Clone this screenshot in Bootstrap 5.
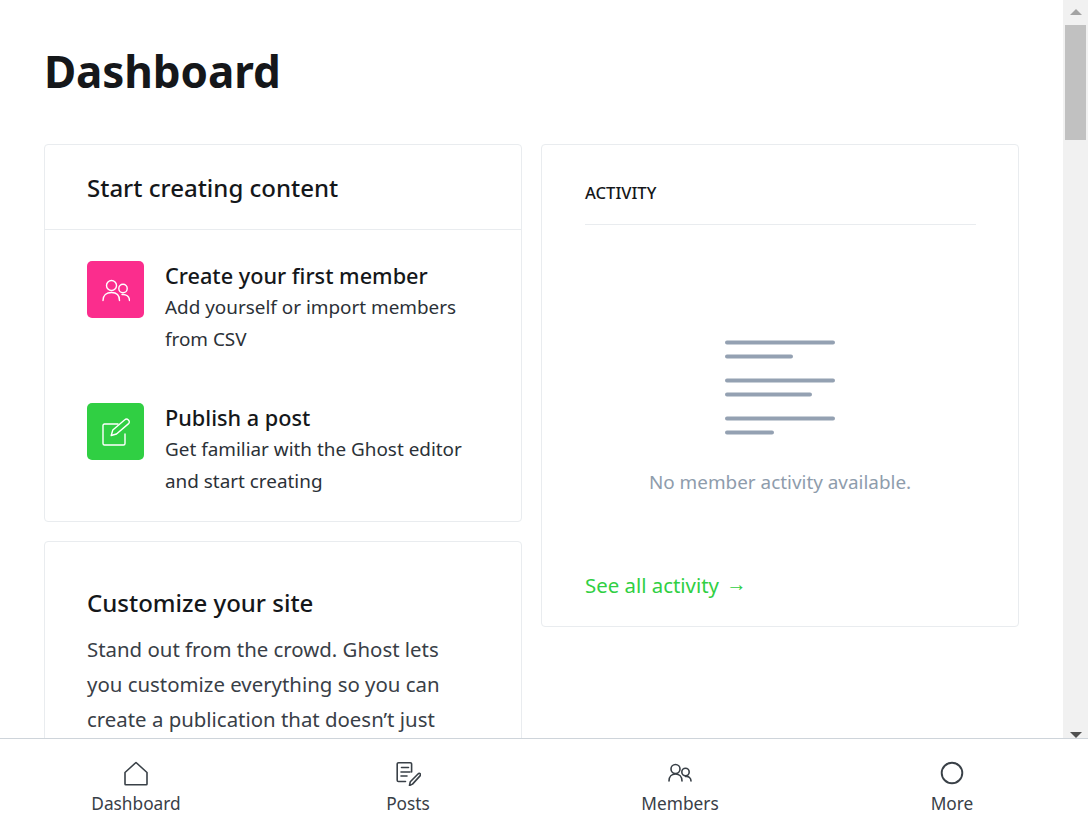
<!DOCTYPE html>
<html lang="en">
<head>
    <meta charset="UTF-8">
    <meta name="viewport" content="width=device-width, initial-scale=1.0">
    <title>Dashboard</title>
    <link href="https://cdn.jsdelivr.net/npm/bootstrap@5.3.0/dist/css/bootstrap.min.css" rel="stylesheet">
    <style>
        html, body { height: 834px; overflow: hidden; }
        body { font-family: "Noto Sans", "Open Sans", sans-serif; color: #15171a; background: #fff; }
        .page-top { height: 738px; overflow: hidden; }
        .page-main { padding: 0 44px; overflow: hidden; }
        .page-title { font-size: 44px; line-height: 63px; font-weight: 700; margin: 40px 0 0; letter-spacing: -.1px; color: #15171a; }
        .dash-grid { display: grid; grid-template-columns: 478px 478px; column-gap: 19px; margin-top: 41px; align-items: start; width: 975px; }
        .left-col { display: flex; flex-direction: column; gap: 19px; }
        .dash-card { border: 1px solid #e9ecef; border-radius: 4px; background: #fff; }
        .start-head { height: 85px; padding: 26px 42px 0; border-bottom: 1px solid #e9ecef; font-size: 24px; line-height: 34px; font-weight: 500; }
        .start-body { padding: 31px 42px 0; height: 291px; }
        .start-item { height: 142px; gap: 21px; }
        .start-tile { width: 57px; height: 57px; border-radius: 5px; flex: none; }
        .tile-pink { background: #fb2d8d; }
        .tile-green { background: #30cf43; }
        .start-name { font-size: 21.7px; line-height: 30px; font-weight: 500; }
        .start-desc { font-size: 18.9px; line-height: 32px; color: #2b3137; }
        .custom-card { padding: 43px 42px 0; height: 300px; }
        .custom-card h2 { font-size: 24px; line-height: 34px; font-weight: 500; margin: 1px 0 12px; }
        .custom-card p { font-size: 20.4px; line-height: 35px; color: #394047; margin: 0; }
        .activity-card { height: 483px; padding: 36px 42px 0 43px; }
        .activity-label { font-size: 16.6px; line-height: 24px; font-weight: 500; height: 44px; border-bottom: 1px solid #e9ecef; color: #15171a; }
        .activity-empty { height: 345px; padding: 114px 1px 0 0; }
        .activity-empty p { font-size: 18.9px; line-height: 28px; color: #8e9cac; margin: 32px 0 0; }
        .activity-link { font-size: 20.4px; line-height: 28px; color: #30cf43; text-decoration: none; }
        .link-arrow { font-family: "Liberation Sans", sans-serif; vertical-align: 2px; margin-left: 2px; }
        .fake-scroll { width: 25px; flex: none; background: #f1f1f1; }
        .fake-thumb { width: 21px; height: 115px; background: #c1c1c1; margin: 10px auto 0; }
        .scroll-up { width: 0; height: 0; margin: 9px auto 0; border: 6px solid transparent; border-top: 0; border-bottom-color: #a3a3a3; }
        .scroll-down { width: 0; height: 0; margin: auto auto 0; border: 6px solid transparent; border-bottom: 0; border-top-color: #505050; }
        .bottom-bar { height: 96px; border-top: 1px solid #ced4da; background: #fff; }
        .bottom-item { flex: 1 1 0; color: #394047; text-decoration: none; font-size: 17.3px; line-height: 24px; padding-top: 21px; }
        .bottom-icon { width: 26px; height: 26px; display: block; margin-bottom: 6px; fill: none; stroke: #394047; stroke-width: 1.6; stroke-linejoin: round; stroke-linecap: round; }
    </style>
</head>
<body>
<div class="d-flex page-top">
    <div class="page-main flex-grow-1">
        <h1 class="page-title">Dashboard</h1>
        <div class="dash-grid">
            <div class="left-col">
                <div class="dash-card">
                    <div class="start-head">Start creating content</div>
                    <div class="start-body">
                        <div class="d-flex start-item">
                            <div class="start-tile tile-pink d-flex align-items-center justify-content-center">
                                <svg width="28" height="28" viewBox="0 0 28 28" fill="none" stroke="#fff" stroke-width="1.4" stroke-linecap="round"><circle cx="9.500" cy="9.500" r="5"/><path d="M1 24.500c0-5 3.500-8 8.500-8s8 3 8 8"/><circle cx="21" cy="12.500" r="4.200"/><path d="M20 18.500c4-.5 7.500 2 7.500 6"/></svg>
                            </div>
                            <div>
                                <div class="start-name">Create your first member</div>
                                <div class="start-desc">Add yourself or import members<br>from CSV</div>
                            </div>
                        </div>
                        <div class="d-flex start-item">
                            <div class="start-tile tile-green d-flex align-items-center justify-content-center">
                                <svg width="28" height="28" viewBox="0 0 28 28" fill="none" stroke="#fff" stroke-width="1.4" stroke-linecap="round" stroke-linejoin="round"><path d="M16 6H2.500C1.600 6 1 6.600 1 7.500v18c0 .9.600 1.500 1.500 1.500h19c.9 0 1.500-.6 1.500-1.500V16"/><path d="M9.200 17.500l1.600-5.500L22.800 1.800c1-.9 2.500-.9 3.600.2s1.200 2.600.2 3.600L14.500 16z"/></svg>
                            </div>
                            <div>
                                <div class="start-name">Publish a post</div>
                                <div class="start-desc">Get familiar with the Ghost editor<br>and start creating</div>
                            </div>
                        </div>
                    </div>
                </div>
                <div class="dash-card custom-card">
                    <h2>Customize your site</h2>
                    <p>Stand out from the crowd. Ghost lets<br>you customize everything so you can<br>create a publication that doesn’t just</p>
                </div>
            </div>
            <div class="dash-card activity-card">
                <div class="activity-label">ACTIVITY</div>
                <div class="activity-empty d-flex flex-column align-items-center">
                    <svg width="110" height="97" viewBox="0 0 110 97" fill="none" stroke="#94a1b2" stroke-width="4" stroke-linecap="round"><path d="M2 3.500h106M2 17.500h64M2 41.500h106M2 55.500h83M2 79.500h106M2 93.500h45"/></svg>
                    <p>No member activity available.</p>
                </div>
                <a href="#" class="activity-link">See all activity <span class="link-arrow">→</span></a>
            </div>
        </div>
    </div>
    <div class="fake-scroll d-flex flex-column">
        <div class="scroll-up"></div>
        <div class="fake-thumb"></div>
        <div class="scroll-down"></div>
    </div>
</div>
<nav class="bottom-bar d-flex">
    <a href="#" class="bottom-item d-flex flex-column align-items-center">
        <svg class="bottom-icon" viewBox="0 0 26 26"><path d="M13 2.500 2 12.500V24c0 .5.300.8.800.8h20.400c.5 0 .8-.3.800-.8V12.500z"/></svg>
        Dashboard
    </a>
    <a href="#" class="bottom-item d-flex flex-column align-items-center">
        <svg class="bottom-icon" viewBox="0 0 26 26"><path d="M10.500 21.500H3.500c-.8 0-1.300-.5-1.300-1.300V4c0-.8.500-1.300 1.300-1.300h11.800c.8 0 1.300.5 1.300 1.300v8M6.500 7.500h7M6 12h9M6 16h6"/><path d="M14.500 25.500l.8-3.800 6.700-6.700 1-1c.8-.8 1.700-.8 2.200-.2s.5 1.400-.2 2.100l-7.500 8.200z"/></svg>
        Posts
    </a>
    <a href="#" class="bottom-item d-flex flex-column align-items-center">
        <svg class="bottom-icon" viewBox="0 0 26 26"><circle cx="8.500" cy="9" r="4.500"/><path d="M2 21c0-4.500 2.800-7 6.500-7s6.500 2.500 6.500 7"/><circle cx="18.500" cy="12" r="3.700"/><path d="M18.500 16.500c3.300-.5 5.500 1.700 5.500 4.500"/></svg>
        Members
    </a>
    <a href="#" class="bottom-item d-flex flex-column align-items-center">
        <svg class="bottom-icon" viewBox="0 0 26 26"><circle cx="13" cy="13" r="10.300" stroke-width="1.900"/></svg>
        More
    </a>
</nav>
<script src="https://cdn.jsdelivr.net/npm/bootstrap@5.3.0/dist/js/bootstrap.bundle.min.js"></script>
</body>
</html>
